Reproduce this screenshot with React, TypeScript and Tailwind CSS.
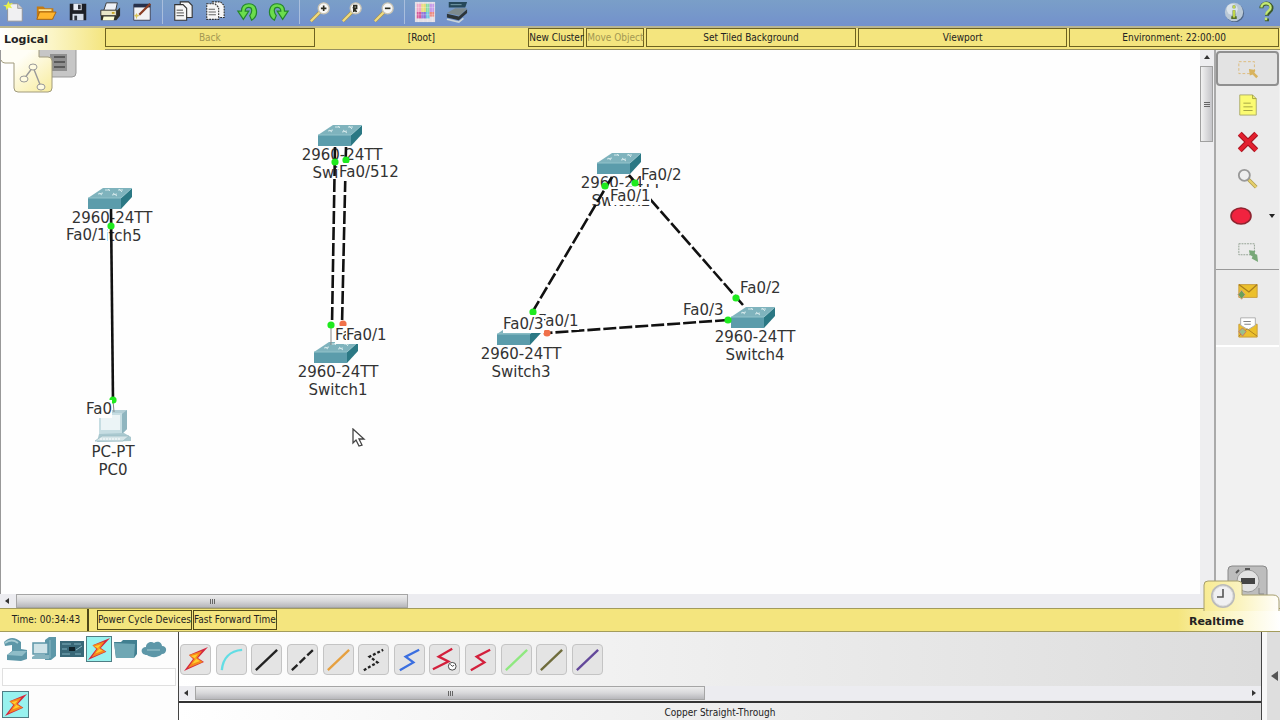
import React from 'react';

type IconProps = { children: React.ReactNode; size?: number };

const Icon = ({ children, size = 22 }: IconProps) => (
  <svg width={size} height={size} viewBox="0 0 24 24" fill="none" aria-hidden="true">
    {children}
  </svg>
);

const Bolt = ({ size = 26 }: { size?: number }) => (
  <svg width={size} height={size} viewBox="0 0 26 26" aria-hidden="true">
    <path d="M25 1 6 9l4 4L1 25l20-9-6-4z" fill="#d4273f" />
    <path d="M19 5 6 9l5 4-6 9 15-6-6-4z" fill="#f58a1c" />
    <path d="M15 8 8 10l5 3-4 5 8-3-5-3z" fill="#ffcf2e" />
  </svg>
);

const Sheet = ({ x, y, dashed }: { x: number; y: number; dashed?: boolean }) => (
  <path
    d={`M${x} ${y}h9l4 4v13h-13z`}
    fill="#f6f6f6"
    stroke="#333"
    strokeWidth="1.2"
    strokeDasharray={dashed ? '2 1' : undefined}
  />
);

const Lens = ({ mark }: { mark: string }) => (
  <Icon>
    <path d="M2 22 12 12" stroke="#a8914a" strokeWidth="3.6" />
    <path d="M2 22 12 12" stroke="#f0dc80" strokeWidth="2.4" />
    <circle cx="16" cy="8" r="6" fill="#f7f7f5" stroke="#c9c4b4" strokeWidth="1.4" />
    <path d={mark} stroke="#2c2c20" strokeWidth="1.8" />
  </Icon>
);

const Turn = ({ flip }: { flip?: boolean }) => (
  <Icon>
    <g transform={flip ? 'translate(24 0) scale(-1 1)' : undefined}>
      <path d="M17 21c5-3 6-8 5-12-1-4-4-6-8-6-5 0-8 3-8 8H2l6 9 6-9h-4c0-3 2-4 4-4 4 0 4 5 1 9z" fill="#6bdd4c" stroke="#24862c" strokeWidth="1.3" />
    </g>
  </Icon>
);

const fileTools = [
  {
    name: 'New',
    icon: (
      <Icon>
        <path d="M5 3h11l5 5v14H5z" fill="#f0f0f2" stroke="#8e9098" />
        <path d="M16 3v5h5" fill="#cfd0d6" stroke="#999" />
        <path d="m6 0 1 3 4-1-3 3 2 3-4-1-2 3-1-4-3-1 4-1z" fill="#e8f04a" />
      </Icon>
    ),
  },
  {
    name: 'Open',
    icon: (
      <Icon>
        <path d="M2 6h7l2 2h9v12H2z" fill="#c47a12" />
        <path d="M5 12h18l-4 8H2z" fill="#ffb62e" stroke="#a8620c" />
        <path d="M4 9h14v2H4z" fill="#ffe48e" />
      </Icon>
    ),
  },
  {
    name: 'Save',
    icon: (
      <Icon>
        <path d="M3 3h18v18H3z" fill="#1d1f26" />
        <path d="M7 3h9v7H7z" fill="#e9edf5" />
        <path d="M12 4h3v5h-3z" fill="#30343e" />
        <path d="M6 14h12v7H6z" fill="#d6deea" />
        <path d="M8 16h3v5H8z" fill="#30343e" />
      </Icon>
    ),
  },
  {
    name: 'Print',
    icon: (
      <Icon>
        <path d="M8 2h12l-2 9H5z" fill="#eef1f7" stroke="#333" />
        <path d="M2 10h18l3-3v9l-4 5H2z" fill="#2f3026" />
        <path d="M2 10h17v6H2z" fill="#e8e6c8" stroke="#333" />
        <path d="M5 17h12l-1 4H4z" fill="#fafad2" />
        <path d="M14 13h3" stroke="#c9a522" strokeWidth="2" />
      </Icon>
    ),
  },
  {
    name: 'Activity Wizard',
    icon: (
      <Icon>
        <path d="M3 4h18v17H3z" fill="#f2f2f4" stroke="#3a3f55" />
        <path d="M3 3h18v4H3z" fill="#27304a" />
        <path d="M9 15 21 3" stroke="#8a3d24" strokeWidth="2.6" />
        <path d="m6 13 1 2 3 1-3 1-1 3-1-3-2-1 2-1z" fill="#d9c65c" />
      </Icon>
    ),
  },
];

const editTools = [
  {
    name: 'Copy',
    icon: (
      <Icon>
        <Sheet x={9} y={1} />
        <Sheet x={3} y={4} />
        <path d="M5 10h7M5 13h8M5 16h8" stroke="#444" />
      </Icon>
    ),
  },
  {
    name: 'Paste',
    icon: (
      <Icon>
        <Sheet x={9} y={1} dashed />
        <Sheet x={3} y={3} dashed />
        <path d="M5 9h7M5 12h8M5 15h8" stroke="#555" />
      </Icon>
    ),
  },
  { name: 'Undo', icon: <Turn /> },
  { name: 'Redo', icon: <Turn flip /> },
];

const zoomTools = [
  { name: 'Zoom In', icon: <Lens mark="M13 8h6M16 5v6" /> },
  { name: 'Zoom Reset', icon: <Lens mark="M14 12V5h3v3h-3l3 4" /> },
  { name: 'Zoom Out', icon: <Lens mark="M13 8h6" /> },
];

const paletteTools = [
  {
    name: 'Drawing Palette',
    icon: (
      <Icon>
        <path d="M1 1h22v22H1z" fill="#e4dfe6" />
        <path d="M3 3h5v9H3z" fill="#f0a8c8" />
        <path d="M8 3h5v9H8z" fill="#e8dc7a" />
        <path d="M13 3h4v9h-4z" fill="#86dca4" />
        <path d="M17 3h5v9h-5z" fill="#c79be8" />
        <path d="M3 12h5v7H3z" fill="#d65a9c" />
        <path d="M8 12h5v7H8z" fill="#8d72d8" />
        <path d="M13 12h4v7h-4z" fill="#6cc4e0" />
        <path d="M17 12h5v5h-5z" fill="#ec8a80" />
        <path d="M1 7h22M1 15h22M5 1v22M10 1v22M15 1v22M20 1v22" stroke="#fff" strokeWidth=".3" />
      </Icon>
    ),
  },
  {
    name: 'Custom Devices',
    icon: (
      <Icon>
        <path d="M3 1h20l-2 6H3z" fill="#26485a" />
        <path d="M5 4h12" stroke="#7fa4b0" />
        <path d="m1 13 9-5h13l-8 8z" fill="#7d8a8e" />
        <path d="m1 14 13 3 9-8v4l-9 8-13-3z" fill="#2d3539" />
        <path d="m1 20 13 3 5-4" stroke="#c8d4da" strokeWidth="1.6" />
      </Icon>
    ),
  },
];

const ToolGroup = ({ tools }: { tools: { name: string; icon: React.ReactNode }[] }) => (
  <>
    {tools.map((tool) => (
      <button key={tool.name} aria-label={tool.name} className="flex h-6 w-7 items-center justify-center">
        {tool.icon}
      </button>
    ))}
  </>
);

const Separator = () => (
  <div className="flex w-[5px] justify-center">
    <div className="h-6 w-px bg-[#a9bedd]" />
  </div>
);

const Toolbar = () => (
  <header className="flex h-[26px] items-start gap-1 bg-linear-to-b from-[#7a9fc8] to-[#7391cc]">
    <ToolGroup tools={fileTools} />
    <Separator />
    <ToolGroup tools={editTools} />
    <Separator />
    <ToolGroup tools={zoomTools} />
    <Separator />
    <ToolGroup tools={paletteTools} />
    <div className="flex-1" />
    <button aria-label="Info" className="flex h-6 w-7 items-center justify-center">
      <Icon>
        <circle cx="13" cy="13" r="10" fill="#4f6687" />
        <circle cx="12" cy="12" r="10" fill="#b9c8d6" />
        <circle cx="10" cy="9" r="6" fill="#dbe4ea" />
        <path d="M12 5v3M12 10v9M9 18h6" stroke="#56702a" strokeWidth="3" />
        <path d="M12 5v3M12 10v8" stroke="#c9df4e" strokeWidth="2" />
      </Icon>
    </button>
    <button aria-label="Help" className="flex h-6 w-7 items-center justify-center">
      <Icon>
        <path d="M7 8c0-7 11-7 11 0 0 4-5 4-5 8M13 19v3" stroke="#3d5a2c" strokeWidth="4.4" />
        <path d="M7 7c0-6 10-6 10 0 0 4-5 4-5 8M12 18v3" stroke="#c3e873" strokeWidth="2.6" />
      </Icon>
    </button>
  </header>
);

const barButton = 'border border-[#6d6220] bg-[#f4e57e] text-center whitespace-nowrap';

const WorkspaceBar = () => (
  <nav className="grid h-6 grid-cols-[103px_1fr_1fr_56px_58px_1fr_1fr_1fr] gap-[2px] border-t-2 border-b border-t-[#b9b58f] border-b-[#96905f] bg-[#f4e57e] pr-px pb-[2px]">
    <div className="-mr-[2px] -mb-[3px] bg-linear-to-r from-white via-[#fbf5c6] to-[#f4e57e] pt-1 pl-1 font-['DejaVu_Sans'] text-[11px] font-bold">
      Logical
    </div>
    <button className={`${barButton} text-[#a39852]`} disabled>Back</button>
    <div className="self-center text-center">[Root]</div>
    <button className={barButton}>New Cluster</button>
    <button className={`${barButton} text-[#a39852]`} disabled>Move Object</button>
    <button className={barButton}>Set Tiled Background</button>
    <button className={barButton}>Viewport</button>
    <button className={barButton}>Environment: 22:00:00</button>
  </nav>
);

const SwitchIcon = () => (
  <svg width="46" height="22" viewBox="0 0 46 22" className="mr-1" aria-hidden="true">
    <path d="M1 11 16 1h29L34 11z" fill="#7fb3bd" />
    <path d="M1 11h33v11H1z" fill="#5b9cab" />
    <path d="M34 11 45 1v9L34 22z" fill="#2b7884" />
    <path d="m11 7 5-1m-1 2-3-2M18 3l5 0m-2-1 2 2M25 8l5-1m-4-1 4 3M31 3l5 0m-4-1 3 3" stroke="#d3e8ea" />
    <path d="M1 11h33L45 1" stroke="#93c2ca" fill="none" />
  </svg>
);

const PcIcon = () => (
  <svg width="44" height="34" viewBox="0 0 44 34" aria-hidden="true">
    <path d="M8 4 12 1h24v19l-5 5H8z" fill="#b3ced5" />
    <path d="M31 5 36 1v19l-5 5z" fill="#8fb5bf" />
    <path d="M8 4h23v21H8z" fill="#c6dde2" />
    <path d="M10 6h19v15H10z" fill="#ebf4f6" />
    <path d="m8 25 25-1 7 4v4l-34 1z" fill="#a9c8cf" />
    <path d="m4 32 7-5h27l-6 5z" fill="#d5e5e8" stroke="#9dbcc4" strokeWidth=".8" />
    <path d="m9 30 21 0" stroke="#fff" strokeDasharray="2 1" />
  </svg>
);

const nodes = [
  { model: '2960-24TT', name: 'Switch5', place: 'left-[70px] top-[137px]' },
  { model: '2960-24TT', name: 'Switch0', place: 'left-[300px] top-[74px]' },
  { model: '2960-24TT', name: 'Switch1', place: 'left-[296px] top-[291px]' },
  { model: '2960-24TT', name: 'Switch2', place: 'left-[579px] top-[102px]' },
  { model: '2960-24TT', name: 'Switch3', place: 'left-[479px] top-[273px]' },
  { model: '2960-24TT', name: 'Switch4', place: 'left-[713px] top-[256px]' },
  { model: 'PC-PT', name: 'PC0', place: 'left-[71px] top-[359px]' },
];

const ports = [
  { label: 'Fa0/1', place: 'left-[66px] top-[177px]' },
  { label: 'Fa0', place: 'left-[86px] top-[351px]' },
  { label: 'Fa0/512', place: 'left-[339px] top-[114px]' },
  { label: 'Fa0/2', place: 'left-[335px] top-[277px]' },
  { label: 'Fa0/1', place: 'left-[346px] top-[277px]' },
  { label: 'Fa0/2', place: 'left-[641px] top-[117px]' },
  { label: 'Fa0/1', place: 'left-[610px] top-[138px]' },
  { label: 'Fa0/2', place: 'left-[740px] top-[230px]' },
  { label: 'Fa0/3', place: 'left-[683px] top-[252px]' },
  { label: 'Fa0/1', place: 'left-[538px] top-[263px]' },
  { label: 'Fa0/3', place: 'left-[503px] top-[266px]' },
];

const links = [
  { d: 'M111 159 113 351', solid: true },
  { d: 'M335 97 332 275' },
  { d: 'M346 97 342 275' },
  { d: 'M612 127 533 261' },
  { d: 'M629 125 743 255' },
  { d: 'M728 270 547 283' },
];

const lights = [
  [111, 176], [113, 350], [335, 112], [346, 110], [331, 275], [605, 136],
  [533, 262], [635, 133], [736, 248], [728, 270],
];
const blocked = [[343, 274], [547, 283]];

const ViewTabs = () => (
  <button aria-label="Logical and physical view" className="absolute -top-px left-0">
    <svg width="78" height="45" viewBox="0 0 78 45" aria-hidden="true">
      <defs>
        <linearGradient id="tab" x1="0" y1="0" x2="1" y2="1">
          <stop offset="0.3" stopColor="#fffef6" />
          <stop offset="1" stopColor="#f8ec9c" />
        </linearGradient>
      </defs>
      <path d="M37 0h38v24q0 4-4 4H37z" fill="#c6c6c6" stroke="#999" />
      <path d="M49 5h17v17H49z" fill="#909090" />
      <path d="M53 8h11M53 13h11M53 18h11" stroke="#5a5a5a" strokeWidth="2" />
      <path d="M0 0h38v8h9q4 0 4 4v27q0 4-4 4H17q-4 0-4-4V14H4q-3 0-4-3" fill="url(#tab)" />
      <path d="M38 0v8h9q4 0 4 4v27q0 4-4 4H17q-4 0-4-4V14H4q-3 0-4-3" fill="none" stroke="#a09a7c" />
      <path d="m23 30 9-12 8 20" stroke="#999" strokeWidth="1.4" fill="none" />
      <g fill="#fffbe0" stroke="#999">
        <ellipse cx="32" cy="18" rx="4" ry="3" />
        <ellipse cx="23" cy="30" rx="4" ry="3" />
        <ellipse cx="40" cy="38" rx="4" ry="3" />
      </g>
    </svg>
  </button>
);

const Workspace = () => (
  <main className="relative min-w-0 flex-1 overflow-hidden border-l border-[#999] bg-[#fefefe] font-['DejaVu_Sans'] text-[15px] text-[#333]">
    <div className="absolute inset-y-0 right-0 -left-px">
      {nodes.map((node) => (
        <div key={node.name} className={`absolute flex w-21 flex-col items-center leading-[18px] ${node.place}`}>
          {node.model === 'PC-PT' ? <PcIcon /> : <SwitchIcon />}
          <span>{node.model}</span>
          <span>{node.name}</span>
        </div>
      ))}
      <svg className="absolute inset-0 h-full w-full" aria-hidden="true">
        <path d="M331 275v20M113 350l1 12" stroke="#888" />
        {links.map((link) => (
          <path key={link.d} d={link.d} stroke="#111" strokeWidth="2.6" strokeDasharray={link.solid ? undefined : '13 3'} />
        ))}
        {lights.map(([x, y]) => (
          <circle key={`${x}-${y}`} cx={x} cy={y} r="3.6" fill="#1eea1e" />
        ))}
        {blocked.map(([x, y]) => (
          <circle key={`${x}-${y}`} cx={x} cy={y} r="3.6" fill="#f0714a" />
        ))}
      </svg>
      {ports.map((port) => (
        <span key={port.place} className={`absolute -mt-px bg-[#fefefe] py-px leading-4 ${port.place}`}>
          {port.label}
        </span>
      ))}
      <svg width="14" height="20" viewBox="0 0 14 20" className="absolute top-[378px] left-[352px]" aria-hidden="true">
        <path d="M1 1v14l3-3 3 6 3-1-3-6h5z" fill="#fff" stroke="#444" strokeWidth="1.3" />
      </svg>
    </div>
    <ViewTabs />
  </main>
);

const arrowPaths = {
  up: 'M1 6h6L4 2z',
  left: 'M6 1v6L2 4z',
  right: 'M2 1v6l4-3z',
};

const Arrow = ({ to }: { to: keyof typeof arrowPaths }) => (
  <button aria-label={`Scroll ${to}`} className="flex h-[14px] w-[14px] shrink-0 items-center justify-center">
    <svg width="8" height="8" viewBox="0 0 8 8" aria-hidden="true">
      <path d={arrowPaths[to]} fill="#333" />
    </svg>
  </button>
);

const HorizontalScroll = ({ thumb }: { thumb: string }) => (
  <div className="flex h-[14px] shrink-0 items-center justify-between bg-[#ececf0]">
    <div className="flex gap-[2px]">
      <Arrow to="left" />
      <div className={`flex h-[14px] items-center justify-center gap-px border border-[#a5a5a5] bg-linear-to-b from-[#ededed] via-[#d8d8da] to-[#b7b7bb] ${thumb}`}>
        <i className="h-[5px] w-px bg-[#666]" />
        <i className="h-[5px] w-px bg-[#666]" />
        <i className="h-[5px] w-px bg-[#666]" />
      </div>
    </div>
    <Arrow to="right" />
  </div>
);

const VerticalScroll = () => (
  <div className="w-[14px] shrink-0 bg-[#eeeef0]">
    <Arrow to="up" />
    <div className="mt-[2px] flex h-19 w-[13px] flex-col items-center justify-center gap-px border border-[#a0a0a0] bg-linear-to-r from-[#f2f2f2] to-[#c4c4c8]">
      <i className="h-px w-[6px] bg-[#666]" />
      <i className="h-px w-[6px] bg-[#666]" />
      <i className="h-px w-[6px] bg-[#666]" />
    </div>
  </div>
);

const Sidebar = () => (
  <aside className="flex w-[66px] shrink-0 flex-col border-l-2 border-[#aaa] bg-[#f1f1f1] pr-px">
    <div className="flex flex-col bg-[#ebebeb]">
      <button aria-label="Select" className="mt-px flex h-[35px] items-center justify-center rounded-sm border-2 border-[#909090] bg-[#e3e3e3]">
        <Icon>
          <path d="M2 4h17v13H2z" stroke="#dcb978" strokeDasharray="3 2" />
          <path d="m13 12 7 1-1 3 4 4-2 2-4-4-3 1z" fill="#d8b35e" />
        </Icon>
      </button>
      <button aria-label="Place Note" className="flex h-[37px] items-center justify-center">
        <Icon>
          <path d="M3 1h14l4 4v18H3z" fill="#fbfb72" stroke="#a8a86a" />
          <path d="M17 1v4h4M7 10h8M7 14h10M7 18h10" stroke="#a0a040" />
        </Icon>
      </button>
      <button aria-label="Delete" className="flex h-[37px] items-center justify-center">
        <Icon>
          <path d="m3 3 18 18M21 3 3 21" stroke="#a3121e" strokeWidth="6" />
          <path d="m3 3 18 18M21 3 3 21" stroke="#e3202f" strokeWidth="4" />
        </Icon>
      </button>
      <button aria-label="Inspect" className="flex h-[37px] items-center justify-center">
        <Icon>
          <path d="m12 12 9 9" stroke="#a89850" strokeWidth="4" />
          <path d="m13 13 8 8" stroke="#e6cf6c" strokeWidth="2.6" />
          <circle cx="8" cy="8" r="6" fill="#eee" stroke="#999" strokeWidth="2" />
        </Icon>
      </button>
      <button aria-label="Draw Shape" className="flex h-[37px] items-center justify-end gap-[17px] pr-1">
        <svg width="22" height="18" viewBox="0 0 22 18" aria-hidden="true">
          <ellipse cx="11" cy="9" rx="10" ry="8" fill="#f0233f" stroke="#8f2430" strokeWidth="1.6" />
        </svg>
        <svg width="6" height="4" viewBox="0 0 6 4" aria-hidden="true">
          <path d="M0 0h6L3 4z" fill="#222" />
        </svg>
      </button>
      <button aria-label="Resize Shape" className="flex h-[35px] items-center justify-center">
        <Icon>
          <path d="M2 3h17v12H2z" stroke="#8d9c8d" strokeDasharray="2 1" />
          <path d="m13 10 7 1-1 3 3 1 1 8-7-4 1-2-3-2z" fill="#78a878" />
        </Icon>
      </button>
      <div className="h-px bg-[#999]" />
      <button aria-label="Add Simple PDU" className="flex h-[42px] items-center justify-center">
        <Icon>
          <path d="M2 5h20v14H2z" fill="#ecc02c" stroke="#c79b3c" />
          <path d="m2 5 11 8 9-8" stroke="#a87c1e" strokeWidth="1.4" />
          <path d="m5 11 4 5-4 5-4-5z" fill="#6aa05a" stroke="#d8a080" />
        </Icon>
      </button>
      <button aria-label="Add Complex PDU" className="flex h-[35px] items-start justify-center border-b-2 border-white pt-1">
        <Icon>
          <path d="M2 9h20v14H2z" fill="#ecc02c" stroke="#c79b3c" />
          <path d="M4 2h16v8l-8 5-8-5z" fill="#fff" stroke="#aaa" />
          <path d="M7 6h8M8 9h7" stroke="#777" />
          <path d="m2 22 9-8 11 8" stroke="#a87c1e" />
          <path d="m6 13 4 4-4 5-4-5z" fill="#9abf8a" stroke="#c66" strokeWidth=".8" />
        </Icon>
      </button>
    </div>
  </aside>
);

const RealtimeTabs = () => (
  <button aria-label="Realtime and simulation mode" className="absolute right-0 bottom-full">
    <svg width="77" height="46" viewBox="0 0 77 46" className="-mb-[2px]" aria-hidden="true">
      <defs>
        <linearGradient id="mode" x1="0" y1="0" x2="1" y2="0">
          <stop offset="0" stopColor="#f8eb92" />
          <stop offset="0.5" stopColor="#fbf4c2" />
          <stop offset="1" stopColor="#fffefa" />
        </linearGradient>
      </defs>
      <path d="M25 32V5q0-4 4-4h31q4 0 4 4v27z" fill="#bdbdbd" stroke="#888" />
      <circle cx="45" cy="16" r="11" fill="#e2e2e2" stroke="#999" />
      <path d="M38 13h14v6H38z" fill="#444" />
      <path d="m33 8 3-3M42 4h5" stroke="#555" strokeWidth="2" />
      <path d="M56 23v6h5" stroke="#888" fill="none" />
      <path d="M1 46V20q0-4 4-4h30q4 0 4 4v10h31q6 0 6 6v10" fill="url(#mode)" stroke="#a69e6e" />
      <circle cx="20" cy="31" r="12" fill="#bbb" />
      <circle cx="20" cy="31" r="10" fill="#f0f0f2" stroke="#ddd" />
      <path d="M20 24v8h-6" stroke="#555" strokeWidth="1.6" fill="none" />
    </svg>
  </button>
);

const TimeBar = () => (
  <section className="relative flex h-6 items-center border-y border-[#a39c5c] bg-[linear-gradient(to_right,#f4e57e_92%,#fcf6c8_96%,#ffffff)]">
    <div className="w-[87px] pl-[5px] text-center">Time: 00:34:43</div>
    <div className="h-full w-[2px] bg-[#4f4818]" />
    <div className="ml-2 flex gap-px">
      <button className="h-5 border border-[#4f4818] whitespace-nowrap">Power Cycle Devices</button>
      <button className="h-5 border border-[#4f4818] whitespace-nowrap">Fast Forward Time</button>
    </div>
    <div className="flex-1" />
    <span className="mt-1 mr-9 font-['DejaVu_Sans'] text-[11px] leading-5 font-bold">Realtime</span>
    <RealtimeTabs />
  </section>
);

const deviceTypes = [
  {
    name: 'Routers and Switches',
    icon: (
      <>
        <path d="M1 6q8-8 17 0v7l6 1v9l-6 2-14-1v-5l5-4V9L2 10z" fill="#5d97a8" />
        <path d="m4 19 6-4h14l-5 5z" fill="#8fbdc8" />
        <path d="M2 7q7-5 13 0" stroke="#a6cbd3" strokeWidth="2" />
      </>
    ),
  },
  {
    name: 'End Devices',
    icon: (
      <>
        <path d="M14 4 18 1h7v19l-5 4h-6z" fill="#5d97a8" />
        <path d="M2 7h15v11H2z" fill="#cfe3e8" stroke="#5d97a8" strokeWidth="1.5" />
        <path d="m1 21 3-2h14v4H1z" fill="#86b3bf" />
        <path d="M19 4v18" stroke="#8dbac5" />
      </>
    ),
  },
  {
    name: 'Components',
    icon: (
      <>
        <path d="M1 5h24v16H1z" fill="#396878" />
        <path d="M3 8h9M15 8h7M3 13h5M3 18h8M16 18h6" stroke="#6898a6" strokeWidth="1.4" />
        <path d="M10 11h6v4h-6z" fill="#10222a" />
        <path d="m17 14 6-4" stroke="#8fb9c6" />
      </>
    ),
  },
  { name: 'Connections', icon: null },
  {
    name: 'Miscellaneous',
    icon: (
      <>
        <path d="M1 6h7l2-2h14v14l-3 4H3z" fill="#417f90" />
        <path d="m1 7 21 1-1 14H3z" fill="#6fa7b4" />
      </>
    ),
  },
  {
    name: 'Multiuser Connection',
    icon: (
      <>
        <path d="M6 19c-7 0-7-8-1-8 0-5 6-6 8-4 4-3 8 0 8 3 6 0 5 8 0 8-4 4-11 4-15 1z" fill="#5d97a8" />
        <path d="M6 14h13" stroke="#8dbac5" strokeWidth="1.5" />
      </>
    ),
  },
];

const DevicePicker = () => (
  <section className="flex w-[178px] shrink-0 flex-col bg-[#fdfdfd] px-[2px] pt-1">
    <div className="flex">
      {deviceTypes.map((type) =>
        type.icon ? (
          <button key={type.name} aria-label={type.name} className="flex h-[26px] w-7 items-center justify-center">
            <svg width="26" height="26" viewBox="0 0 26 26" fill="none" aria-hidden="true">
              {type.icon}
            </svg>
          </button>
        ) : (
          <button key={type.name} aria-label={type.name} className="flex h-[26px] w-[26px] items-center justify-center border border-[#4f7d84] bg-[#98f2ee]">
            <Bolt size={24} />
          </button>
        )
      )}
    </div>
    <input aria-label="Device category" readOnly className="mt-[6px] h-[18px] border border-[#e0e0e0] bg-white px-1" />
    <button aria-label="Connections" className="mt-[5px] flex h-[27px] w-[27px] items-center justify-center border border-[#4f7d84] bg-[#98f2ee]">
      <Bolt size={24} />
    </button>
  </section>
);

const zigzag = 'M5 26 19 18 11 12 25 5';
const diagonal = 'M4 26 26 5';

const cables = [
  { name: 'Automatic', drawing: null },
  { name: 'Console', drawing: <path d="M5 26C6 14 13 6 26 5" stroke="#62dde4" strokeWidth="2.4" /> },
  { name: 'Copper Straight-Through', drawing: <path d={diagonal} stroke="#222" strokeWidth="2.4" /> },
  { name: 'Copper Cross-Over', drawing: <path d={diagonal} stroke="#222" strokeWidth="2.4" strokeDasharray="8 3" /> },
  { name: 'Fiber', drawing: <path d={diagonal} stroke="#e6a040" strokeWidth="2.4" /> },
  { name: 'Phone', drawing: <path d={zigzag} stroke="#222" strokeWidth="2.4" strokeDasharray="3 2" /> },
  { name: 'Coaxial', drawing: <path d={zigzag} stroke="#3b6fe0" strokeWidth="2.4" /> },
  {
    name: 'Serial DCE',
    drawing: (
      <>
        <path d="M3 25 19 17 9 12 23 4" stroke="#d3203c" strokeWidth="2.4" />
        <circle cx="23" cy="22" r="4" fill="#fff" stroke="#444" />
        <path d="M21 20l2 2 2-1" stroke="#444" />
      </>
    ),
  },
  { name: 'Serial DTE', drawing: <path d={zigzag} stroke="#d3203c" strokeWidth="2.4" /> },
  { name: 'Octal', drawing: <path d={diagonal} stroke="#8fe880" strokeWidth="2.4" /> },
  { name: 'IoE Custom', drawing: <path d={diagonal} stroke="#6f6c3c" strokeWidth="2.4" /> },
  { name: 'USB', drawing: <path d={diagonal} stroke="#63489a" strokeWidth="2.4" /> },
];

const CablePicker = () => (
  <section className="flex min-w-0 flex-1 flex-col border-x border-[#444] bg-linear-to-r from-white to-[#dcdcdc]">
    <div className="flex h-[54px] w-[425px] shrink-0 items-center justify-between px-px">
      {cables.map((cable) => (
        <button key={cable.name} aria-label={cable.name} className="flex h-[31px] w-[31px] items-center justify-center rounded-sm border border-[#c4c4c4] bg-[#e4e4e4]">
          {cable.drawing ? (
            <svg width="29" height="29" viewBox="0 0 30 30" fill="none" className="shrink-0" aria-hidden="true">
              {cable.drawing}
            </svg>
          ) : (
            <Bolt />
          )}
        </button>
      ))}
    </div>
    <HorizontalScroll thumb="w-[510px]" />
    <div className="mt-px border-t-2 border-[#333] pt-[2px] text-center leading-[15px]">Copper Straight-Through</div>
  </section>
);

export default function App() {
  return (
    <div className="flex min-h-screen flex-col bg-[#f1f1f1] font-['DejaVu_Sans_Condensed','Noto_Sans',sans-serif] text-[10px] leading-4 text-[#222]">
      <Toolbar />
      <WorkspaceBar />
      <div className="flex flex-1">
        <div className="flex min-w-0 flex-1 flex-col">
          <div className="flex flex-1">
            <Workspace />
            <VerticalScroll />
          </div>
          <HorizontalScroll thumb="w-[392px]" />
        </div>
        <Sidebar />
      </div>
      <TimeBar />
      <footer className="flex h-22">
        <DevicePicker />
        <CablePicker />
        <button aria-label="Collapse panel" className="flex w-[18px] items-center justify-center border-l-5 border-[#f8f8f8] bg-[#dedede]">
          <svg width="8" height="12" viewBox="0 0 8 12" aria-hidden="true">
            <path d="M8 1v10L1 6z" fill="#555" />
          </svg>
        </button>
      </footer>
    </div>
  );
}
